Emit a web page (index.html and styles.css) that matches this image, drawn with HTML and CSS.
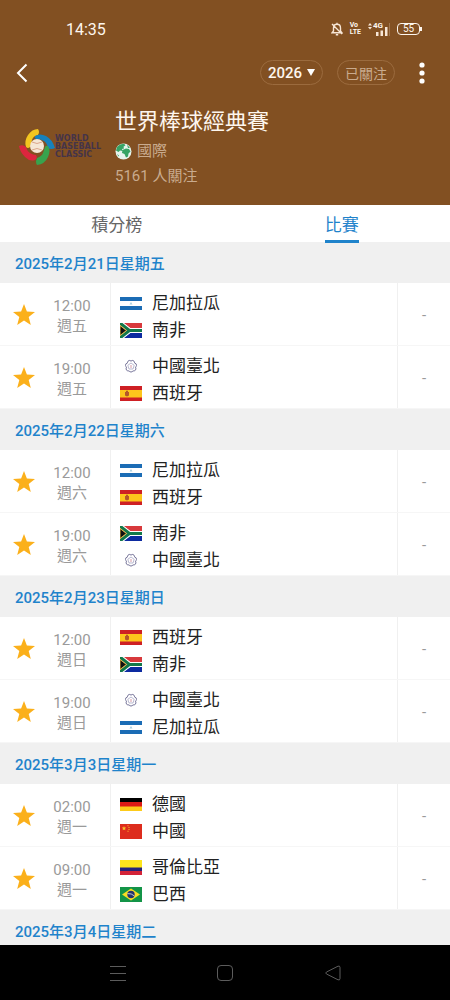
FILE: index.html
```html
<!DOCTYPE html>
<html lang="zh-Hant">
<head>
  <meta charset="UTF-8">
  <meta name="viewport" content="width=device-width, initial-scale=1.0">
  <title>世界棒球經典賽</title>
  <link rel="stylesheet" href="styles.css">
</head>
<body>
  <!-- Shared icons and flags -->
  <svg class="sprite" aria-hidden="true">
    <symbol id="star" viewBox="0 0 22 21">
      <path d="M11 0l2.9 7.4 8.1.5-6.300 5.100 2.100 8L11 16.600 4.200 21l2.100-8L0 7.900l8.100-.5z" fill="#fbb01b"/>
    </symbol>
    <symbol id="ni" viewBox="0 0 22 15">
      <path fill="#fff" d="M0 1h22v13H0z"/>
      <path fill="#1b6cb5" d="M0 1h22v4H0zM0 10h22v4H0z"/>
      <path d="M11 6l1.500 2.500h-3z" fill="#a9cfe0"/>
    </symbol>
    <symbol id="za" viewBox="0 0 22 15">
      <path fill="#fff" d="M0 0h22v15H0z"/>
      <path fill="#d8393c" d="M3 0h19v5H10z"/>
      <path fill="#0c2aa0" d="M3 15h19v-5H10z"/>
      <path d="M0 0l9.500 7.500L0 15M9 7.500h13" fill="none" stroke="#fff" stroke-width="5"/>
      <path d="M0 0l9.500 7.500L0 15M9 7.500h13" fill="none" stroke="#12784a" stroke-width="3"/>
      <path d="M0 2.500l6.500 5-6.500 5z" fill="#111" stroke="#e5b13a"/>
    </symbol>
    <symbol id="tpe" viewBox="0 0 22 15">
      <g fill="#fff" stroke="#77759a">
        <path d="M11 2q2-1.300 3 .2 .8 1 .5 1.800 2.300.5 2 2.500-.2 1-1 1.600 1 2-.2 3.200-1 .9-2.300.6Q12.200 13 11 13t-2-1.100q-1.300.3-2.300-.6-1.200-1.200-.2-3.200-.8-.6-1-1.600Q5.200 4.500 7.500 4 7.200 3.200 8 2.200 9 .7 11 2z"/>
        <path d="M11 4l3.200 2.300-1.200 3.700H9L7.800 6.300z" fill="none" stroke="#aaa8c4" stroke-width=".8"/>
        <path d="M11 6v3" stroke="#d79aa5"/>
      </g>
    </symbol>
    <symbol id="es" viewBox="0 0 22 15">
      <path fill="#ce2024" d="M0 0h22v15H0z"/>
      <path fill="#fdc51c" d="M0 4h22v7.500H0z"/>
      <path fill="#b4572a" d="M5 6h4v3.500L7 10.500 5 9.500zM6 4.800h2V6H6z"/>
    </symbol>
    <symbol id="de" viewBox="0 0 22 15">
      <path d="M0 1h22v5H0z"/>
      <path fill="#dc1a16" d="M0 5h22v5H0z"/>
      <path fill="#fdcb1a" d="M0 9.500h22V14H0z"/>
    </symbol>
    <symbol id="cn" viewBox="0 0 22 15">
      <path fill="#dd2c1d" d="M0 0h22v15H0z"/>
      <path fill="#f9c22e" d="M4 2l.6 1.500 1.600.1L5 4.700l.4 1.600L4 5.400l-1.400.9L3 4.700 1.800 3.600l1.600-.1zM7.500 1.200h1v1h-1zM8.500 3h1v1h-1zM8.500 5h1v1h-1zM7.500 6.700h1v1h-1z"/>
    </symbol>
    <symbol id="co" viewBox="0 0 22 15">
      <path fill="#fde51c" d="M0 0h22v8H0z"/>
      <path fill="#24257a" d="M0 7.500h22V11H0z"/>
      <path fill="#d32338" d="M0 11h22v4H0z"/>
    </symbol>
    <symbol id="br" viewBox="0 0 22 15">
      <path fill="#139447" d="M0 0h22v15H0z"/>
      <path fill="#f9dd24" d="M11 1.500l9 6-9 6-9-6z"/>
      <circle cx="11" cy="7.500" r="3.700" fill="#26336f"/>
      <path d="M7.500 6.600q4-.4 6.800 2.300" fill="none" stroke="#e5eee5" stroke-width=".8"/>
    </symbol>
  </svg>

  <header class="header">
    <div class="status-bar">
      <span class="clock">14:35</span>
      <div class="status-icons">
        <svg width="12" height="14" viewBox="0 0 12 14" fill="none" stroke="#f7e6d6" stroke-width="1.400">
          <path d="M2.500 9V6c0-5 7-5 7 0v3l1.500 1.800H1zM6 .8v1.500M4.800 12.800h2.400M1 2l10 10"/>
        </svg>
        <span class="volte">Vo<br>LTE</span>
        <div class="signal">
          <svg width="22" height="14" viewBox="0 0 22 14" fill="#f7e6d6">
            <path d="M2 1l2 2.500H0zM2 7.500L0 5h4zM8 10h2.500v4H8zM12.500 8.500H15V14h-2.500zM17 5h2.500v9H17z"/>
            <path d="M21 1h1v13h-1z" opacity=".25"/>
          </svg>
          <span class="network">4G</span>
        </div>
        <span class="battery">55</span>
      </div>
    </div>

    <div class="toolbar">
      <button class="icon-button" aria-label="返回">
        <svg width="12" height="20" viewBox="0 0 12 20" fill="none" stroke="#fff" stroke-width="2">
          <path d="M10.500 1.500L2 10l8.500 8.500"/>
        </svg>
      </button>
      <div class="actions">
        <button class="pill">2026
          <svg width="8" height="7" viewBox="0 0 8 7" fill="#fff"><path d="M0 0h8L4 7z"/></svg>
        </button>
        <button class="pill following">已關注</button>
        <button class="icon-button" aria-label="更多">
          <svg width="6" height="22" viewBox="0 0 6 22" fill="#fff">
            <circle cx="3" cy="3" r="2.600"/><circle cx="3" cy="11" r="2.600"/><circle cx="3" cy="19" r="2.600"/>
          </svg>
        </button>
      </div>
    </div>

    <div class="league">
      <div class="league-logo">
        <svg width="36" height="36" viewBox="0 0 36 36">
          <path d="M7 18Q5 12 9 6t10-6q2 3 0 6-5 1-6 5t-2 7q-2 2-4 0z" fill="#f3c51f"/>
          <path d="M16 7q5-3 11 0t9 12q-4 2-7 0-1-5-4-7t-8-2q-2-1-1-3z" fill="#1681bd"/>
          <path d="M29 17q3 4 0 11t-11 8q-2-3 0-7 5-2 6-5t2-6q1-2 3-1z" fill="#38a34d"/>
          <path d="M0 17q4-2 7 1 1 4 4 6t6 2q2 3-1 5-5 2-10-3T0 17z" fill="#dc263e"/>
          <circle cx="18" cy="17" r="7" fill="#f5e7d5"/>
          <path d="M13 13q5 3 10 0M13 21q5-3 10 0" fill="none" stroke="#dba78d"/>
        </svg>
        <span class="logo-name">WORLD<br>BASEBALL<br>CLASSIC</span>
      </div>
      <div class="league-info">
        <h1>世界棒球經典賽</h1>
        <p class="country">
          <svg width="17" height="17" viewBox="0 0 17 17">
            <circle cx="8.500" cy="8.500" r="8" fill="#e6f4ed"/>
            <path d="M2 4l3-2.500 4-.7 1.500 1.500-2 1.500.5 1.700-2 .5.500 2-2.500-.5L3.500 9 1 7.500zM7.500 7l3.500-1.500L14 6l1.500 2.500-2 2-.5 3-2 1-1.500-3.500-2.500-1zM12 1.800l3 3-2 .2zM2 11l2 1.500-.5 1z" fill="#36a464"/>
          </svg>
          國際
        </p>
        <p>5161 人關注</p>
      </div>
    </div>
  </header>

  <nav class="tabs">
    <a href="#standings">積分榜</a>
    <a href="#matches" class="active" aria-current="page">比賽</a>
  </nav>

  <main class="matches" id="matches">
    <section>
      <h2>2025年2月21日星期五</h2>
      <div class="match">
        <button class="favorite" aria-label="收藏"><svg width="22" height="21"><use href="#star"/></svg></button>
        <div class="time">12:00<br>週五</div>
        <div class="teams">
          <div class="team"><svg class="flag"><use href="#ni"/></svg>尼加拉瓜</div>
          <div class="team"><svg class="flag"><use href="#za"/></svg>南非</div>
        </div>
        <div class="score">-</div>
      </div>
      <div class="match">
        <button class="favorite" aria-label="收藏"><svg width="22" height="21"><use href="#star"/></svg></button>
        <div class="time">19:00<br>週五</div>
        <div class="teams">
          <div class="team"><svg class="flag"><use href="#tpe"/></svg>中國臺北</div>
          <div class="team"><svg class="flag"><use href="#es"/></svg>西班牙</div>
        </div>
        <div class="score">-</div>
      </div>
    </section>

    <section>
      <h2>2025年2月22日星期六</h2>
      <div class="match">
        <button class="favorite" aria-label="收藏"><svg width="22" height="21"><use href="#star"/></svg></button>
        <div class="time">12:00<br>週六</div>
        <div class="teams">
          <div class="team"><svg class="flag"><use href="#ni"/></svg>尼加拉瓜</div>
          <div class="team"><svg class="flag"><use href="#es"/></svg>西班牙</div>
        </div>
        <div class="score">-</div>
      </div>
      <div class="match">
        <button class="favorite" aria-label="收藏"><svg width="22" height="21"><use href="#star"/></svg></button>
        <div class="time">19:00<br>週六</div>
        <div class="teams">
          <div class="team"><svg class="flag"><use href="#za"/></svg>南非</div>
          <div class="team"><svg class="flag"><use href="#tpe"/></svg>中國臺北</div>
        </div>
        <div class="score">-</div>
      </div>
    </section>

    <section>
      <h2>2025年2月23日星期日</h2>
      <div class="match">
        <button class="favorite" aria-label="收藏"><svg width="22" height="21"><use href="#star"/></svg></button>
        <div class="time">12:00<br>週日</div>
        <div class="teams">
          <div class="team"><svg class="flag"><use href="#es"/></svg>西班牙</div>
          <div class="team"><svg class="flag"><use href="#za"/></svg>南非</div>
        </div>
        <div class="score">-</div>
      </div>
      <div class="match">
        <button class="favorite" aria-label="收藏"><svg width="22" height="21"><use href="#star"/></svg></button>
        <div class="time">19:00<br>週日</div>
        <div class="teams">
          <div class="team"><svg class="flag"><use href="#tpe"/></svg>中國臺北</div>
          <div class="team"><svg class="flag"><use href="#ni"/></svg>尼加拉瓜</div>
        </div>
        <div class="score">-</div>
      </div>
    </section>

    <section>
      <h2>2025年3月3日星期一</h2>
      <div class="match">
        <button class="favorite" aria-label="收藏"><svg width="22" height="21"><use href="#star"/></svg></button>
        <div class="time">02:00<br>週一</div>
        <div class="teams">
          <div class="team"><svg class="flag"><use href="#de"/></svg>德國</div>
          <div class="team"><svg class="flag"><use href="#cn"/></svg>中國</div>
        </div>
        <div class="score">-</div>
      </div>
      <div class="match">
        <button class="favorite" aria-label="收藏"><svg width="22" height="21"><use href="#star"/></svg></button>
        <div class="time">09:00<br>週一</div>
        <div class="teams">
          <div class="team"><svg class="flag"><use href="#co"/></svg>哥倫比亞</div>
          <div class="team"><svg class="flag"><use href="#br"/></svg>巴西</div>
        </div>
        <div class="score">-</div>
      </div>
    </section>

    <section>
      <h2>2025年3月4日星期二</h2>
    </section>
  </main>

  <footer class="nav-bar">
    <button class="icon-button" aria-label="最近">
      <svg width="16" height="16" viewBox="0 0 16 16" stroke="#5c5c5c"><path d="M0 1.500h16M0 8.500h16M0 15.500h16"/></svg>
    </button>
    <button class="icon-button" aria-label="主畫面">
      <svg width="16" height="16" viewBox="0 0 16 16" fill="none" stroke="#5c5c5c"><rect x=".5" y=".5" width="15" height="15" rx="3.500"/></svg>
    </button>
    <button class="icon-button" aria-label="上一頁">
      <svg width="16" height="16" viewBox="0 0 16 16" fill="none" stroke="#5c5c5c"><path d="M1.500 7L13 1.200q2-.7 2 1.300v11q0 2-2 1.300L1.500 9q-1.500-1 0-2z"/></svg>
    </button>
  </footer>
</body>
</html>
```

FILE: styles.css
```css
* {
  margin: 0;
  padding: 0;
  box-sizing: border-box;
}

:root {
  --brand: #825022;
  --accent: #1f83cb;
  --muted: #9a9a9a;
  --line: #f0f0f0;
  --on-brand: #fdf6ee;
  --on-brand-muted: #c9ab8e;
}

body {
  font-family: Roboto, "Noto Sans CJK TC", sans-serif;
  font-size: 15px;
  height: 100vh;
  display: flex;
  flex-direction: column;
  background: #fff;
  color: #222;
}

button {
  font: inherit;
  color: inherit;
  background: none;
  border: none;
  cursor: pointer;
}

svg {
  display: block;
  flex-shrink: 0;
}

.sprite {
  position: absolute;
  width: 0;
  height: 0;
}

/* Header */
.header {
  flex-shrink: 0;
  background: var(--brand);
  color: var(--on-brand);
  padding-bottom: 16px;
}

.status-bar {
  display: flex;
  justify-content: space-between;
  align-items: center;
  padding: 18px 28px 0 66px;
  height: 40px;
}

.clock {
  font-size: 16px;
}

.status-icons {
  display: flex;
  align-items: center;
  gap: 7px;
}

.volte {
  font-size: 7px;
  line-height: 7px;
  font-weight: 700;
}

.signal {
  position: relative;
}

.network {
  position: absolute;
  left: 5px;
  top: 0;
  font-size: 8px;
  line-height: 8px;
  font-weight: 700;
}

.battery {
  position: relative;
  width: 23px;
  margin-right: 2px;
  border: 1px solid var(--on-brand);
  border-radius: 4px;
  font-size: 10px;
  line-height: 10px;
  text-align: center;
}

.battery::after {
  content: "";
  position: absolute;
  left: 22px;
  top: 3px;
  width: 2px;
  height: 4px;
  background: var(--on-brand);
}

.toolbar {
  display: flex;
  justify-content: space-between;
  align-items: center;
  padding: 0 25px 0 16px;
  height: 65px;
}

.actions {
  display: flex;
  align-items: center;
  gap: 14px;
}

.actions .icon-button {
  margin-left: 10px;
}

.pill {
  display: flex;
  align-items: center;
  gap: 5px;
  height: 25px;
  padding: 0 7px;
  border: 1px solid #9b6b3e;
  border-radius: 13px;
  font-size: 15px;
  font-weight: 500;
}

.following {
  font-size: 14px;
  font-weight: 400;
  color: var(--on-brand-muted);
}

.league {
  display: flex;
  align-items: center;
  gap: 15px;
  padding-left: 19px;
}

.league-logo {
  display: flex;
  align-items: center;
  width: 81px;
}

.logo-name {
  font-family: "DejaVu Sans", sans-serif;
  font-size: 8px;
  line-height: 8px;
  font-weight: 700;
  color: #453449;
}

.league-info {
  color: var(--on-brand-muted);
  line-height: 25px;
}

h1 {
  font-size: 22px;
  line-height: 34px;
  font-weight: 400;
  color: var(--on-brand);
}

.country {
  display: flex;
  align-items: center;
  gap: 5px;
}

/* Tabs */
.tabs {
  flex-shrink: 0;
  display: flex;
  justify-content: space-around;
  height: 37px;
}

.tabs a {
  height: 38px;
  color: #666;
  font-size: 17px;
  line-height: 40px;
  text-decoration: none;
}

.tabs .active {
  z-index: 1;
  color: var(--accent);
  border-bottom: 3px solid var(--accent);
}

/* Match list */
.matches {
  flex: 1;
  min-height: 0;
  overflow: hidden;
}

h2 {
  height: 41px;
  padding-left: 15px;
  background: var(--line);
  color: var(--accent);
  font-size: 15px;
  line-height: 44px;
  font-weight: 500;
}

.match {
  display: flex;
  height: 63px;
  border-bottom: 1px solid #f6f6f6;
}

.favorite {
  width: 48px;
  padding-left: 13px;
}

.time {
  width: 63px;
  padding: 13px 14px 0 0;
  border-right: 1px solid var(--line);
  color: var(--muted);
  line-height: 20px;
  text-align: center;
}

.teams {
  flex: 1;
  padding: 7px 9px 0;
  font-size: 17px;
  line-height: 27px;
}

.team {
  display: flex;
  align-items: center;
  gap: 10px;
}

.flag {
  width: 22px;
  height: 15px;
}

.score {
  width: 53px;
  border-left: 1px solid var(--line);
  color: var(--muted);
  line-height: 64px;
  text-align: center;
}

/* System navigation */
.nav-bar {
  flex-shrink: 0;
  display: flex;
  justify-content: space-evenly;
  align-items: center;
  height: 55px;
  padding: 0 18px;
  background: #000;
}
```
